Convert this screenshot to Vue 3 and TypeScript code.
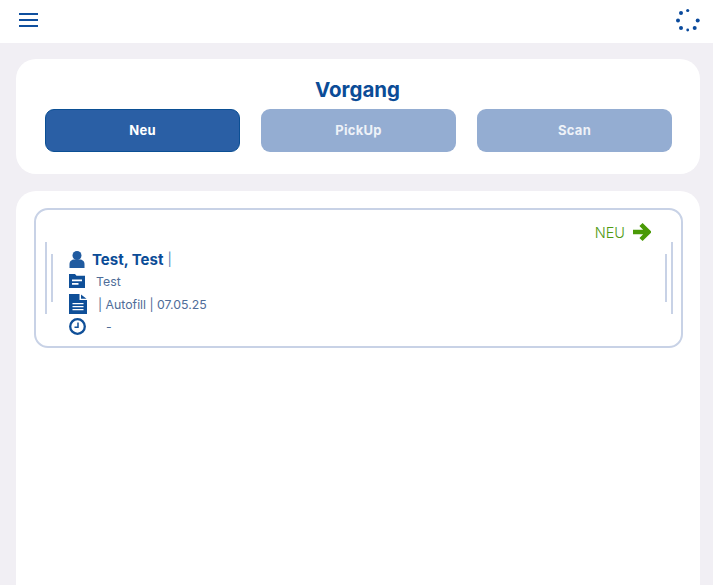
<script setup lang="ts">
const buttons = [
  { label: 'Neu', active: true },
  { label: 'PickUp', active: false },
  { label: 'Scan', active: false },
]
const spinnerDots = [
  { cx: 13.7, cy: 2.5, r: 1.6 },
  { cx: 7, cy: 5, r: 2 },
  { cx: 4, cy: 12.5, r: 2 },
  { cx: 7, cy: 20, r: 2 },
  { cx: 13.7, cy: 22, r: 1.4 },
  { cx: 20.7, cy: 20, r: 2 },
  { cx: 23.7, cy: 12.5, r: 2 },
]
</script>

<template>
  <div class="page">
    <header class="topbar">
      <button class="menu" aria-label="Menü">
        <span></span><span></span><span></span>
      </button>
      <svg width="26" height="24" viewBox="0 0 26 24">
        <circle v-for="(d, i) in spinnerDots" :key="i" :cx="d.cx" :cy="d.cy" :r="d.r" fill="#0a4a9c" />
      </svg>
    </header>

    <main class="content">
      <section class="card card--top">
        <h1 class="title">Vorgang</h1>
        <div class="actions">
          <button
            v-for="b in buttons"
            :key="b.label"
            class="action"
            :class="{ 'action--active': b.active }"
          >
            {{ b.label }}
          </button>
        </div>
      </section>

      <section class="card card--list">
        <article class="entry">
          <i class="rail rail--l1"></i>
          <i class="rail rail--l2"></i>
          <i class="rail rail--r1"></i>
          <i class="rail rail--r2"></i>

          <div class="status">
            <span>NEU</span>
            <svg width="18" height="20" viewBox="0 0 18 20">
              <path d="M0 10h14M8 2.500l7.500 7.500-7.500 7.500" fill="none" stroke="#4a9a06" stroke-width="4.500" />
            </svg>
          </div>

          <div class="row row--name">
            <svg class="icon" width="16" height="17" viewBox="0 0 16 17">
              <circle cx="8" cy="4.500" r="4.500" fill="#205ba0" />
              <path d="M0.500 17v-4C0.500 10 3 8.500 5 8.500h6c2 0 4.500 1.500 4.500 4.500v4z" fill="#205ba0" />
            </svg>
            <span class="name">Test, Test</span>
            <span class="sep">|</span>
          </div>
          <div class="row row--folder">
            <svg class="icon" width="16" height="14" viewBox="0 0 16 14">
              <path d="M0 0h6l1.500 1.800H16V14H0z" fill="#0f4f98" />
              <path d="M3 5.500h10v1.800H3zM3 9h6.500v1.800H3z" fill="#fff" />
            </svg>
            <span class="text">Test</span>
          </div>
          <div class="row row--doc">
            <svg class="icon" width="18" height="20" viewBox="0 0 18 20">
              <path d="M0 0h10.500v6H18v14H0z" fill="#0f4f98" />
              <path d="M12 0.500L17.500 4.800H12z" fill="#0f4f98" />
              <path d="M3.500 9h11v1.300h-11zM3.500 12h11v1.300h-11zM3.500 15h11v1.300h-11z" fill="#fff" />
            </svg>
            <span class="text">| Autofill | 07.05.25</span>
          </div>
          <div class="row row--time">
            <svg class="icon" width="17" height="17" viewBox="0 0 17 17">
              <circle cx="8.500" cy="8.500" r="7.300" fill="none" stroke="#0f4f98" stroke-width="2.300" />
              <path d="M9 4.500V9.300H5.500" fill="none" stroke="#0f4f98" stroke-width="1.500" />
            </svg>
            <span class="text">-</span>
          </div>
        </article>
      </section>
    </main>
  </div>
</template>

<style>
html,
body {
  margin: 0;
  background: #f1eff4;
}
</style>

<style scoped>
.page {
  height: 585px;
  overflow: hidden;
  display: flex;
  flex-direction: column;
  font-family: Inter, "Liberation Sans", sans-serif;
  background: #f1eff4;
}

.topbar {
  height: 43px;
  flex: none;
  box-sizing: border-box;
  display: flex;
  align-items: center;
  justify-content: space-between;
  padding: 0 13px 3px 19px;
  background: #fff;
}

.menu {
  display: flex;
  flex-direction: column;
  gap: 4px;
  width: 19px;
  padding: 0;
  border: 0;
  background: none;
}

.menu span {
  height: 2px;
  background: #0f4f9e;
}

.content {
  flex: 1;
  display: flex;
  flex-direction: column;
  gap: 17px;
  padding: 16px 13px 0 16px;
}

.card {
  background: #fff;
  border-radius: 20px;
}

.card--top {
  height: 115px;
  box-sizing: border-box;
  padding: 18px 28px 0 29px;
}

.title {
  margin: 0 0 6px;
  height: 26px;
  padding-right: 2px;
  font-size: 20.500px;
  line-height: 26px;
  font-weight: 700;
  text-align: center;
  color: #0b4c97;
}

.actions {
  display: grid;
  grid-template-columns: repeat(3, 1fr);
  gap: 21px;
}

.action {
  height: 43px;
  padding: 0 0 2px;
  border: 0;
  border-radius: 9px;
  background: #94add2;
  color: #eef2f8;
  font: 700 13px Inter, "Liberation Sans", sans-serif;
  letter-spacing: 0.3px;
}

.action--active {
  background: #2a5fa5;
  border: 1px solid #0b4f94;
  color: #fff;
}

.card--list {
  flex: 1;
  padding: 17px 17px 0 18px;
  border-radius: 20px 20px 0 0;
}

.entry {
  position: relative;
  height: 140px;
  box-sizing: border-box;
  padding: 12px 0 0 33px;
  border: 2px solid #c8d2e6;
  border-radius: 14px;
}

.rail {
  position: absolute;
  width: 2px;
  background: #c8d2e6;
}

.rail--l1 { left: 9px; top: 32px; height: 72px; }
.rail--l2 { left: 15px; top: 44px; height: 48px; }
.rail--r1 { right: 8px; top: 32px; height: 72px; }
.rail--r2 { right: 14px; top: 44px; height: 48px; }

.status {
  position: absolute;
  top: 12px;
  right: 30px;
  display: flex;
  align-items: center;
  gap: 8px;
  font-size: 14.500px;
  font-weight: 300;
  color: #4f9a12;
}

.row {
  display: flex;
  align-items: center;
}

.row--name { height: 22px; margin-top: 26px; }
.row--folder { height: 20px; margin-top: 1px; }
.row--doc { height: 22px; margin-top: 2px; }
.row--time { height: 20px; margin-top: 1px; }

.icon {
  flex: none;
}

.name {
  margin-left: 7px;
  font-size: 15px;
  font-weight: 700;
  color: #0b4c97;
}

.sep {
  margin-left: 4px;
  font-size: 13px;
  color: #5c82b5;
}

.text {
  font-size: 12.300px;
  color: #4f6d99;
}

.row--folder .text { margin-left: 11px; }
.row--doc .text { margin-left: 11px; }
.row--time .text { margin-left: 20px; }
</style>
